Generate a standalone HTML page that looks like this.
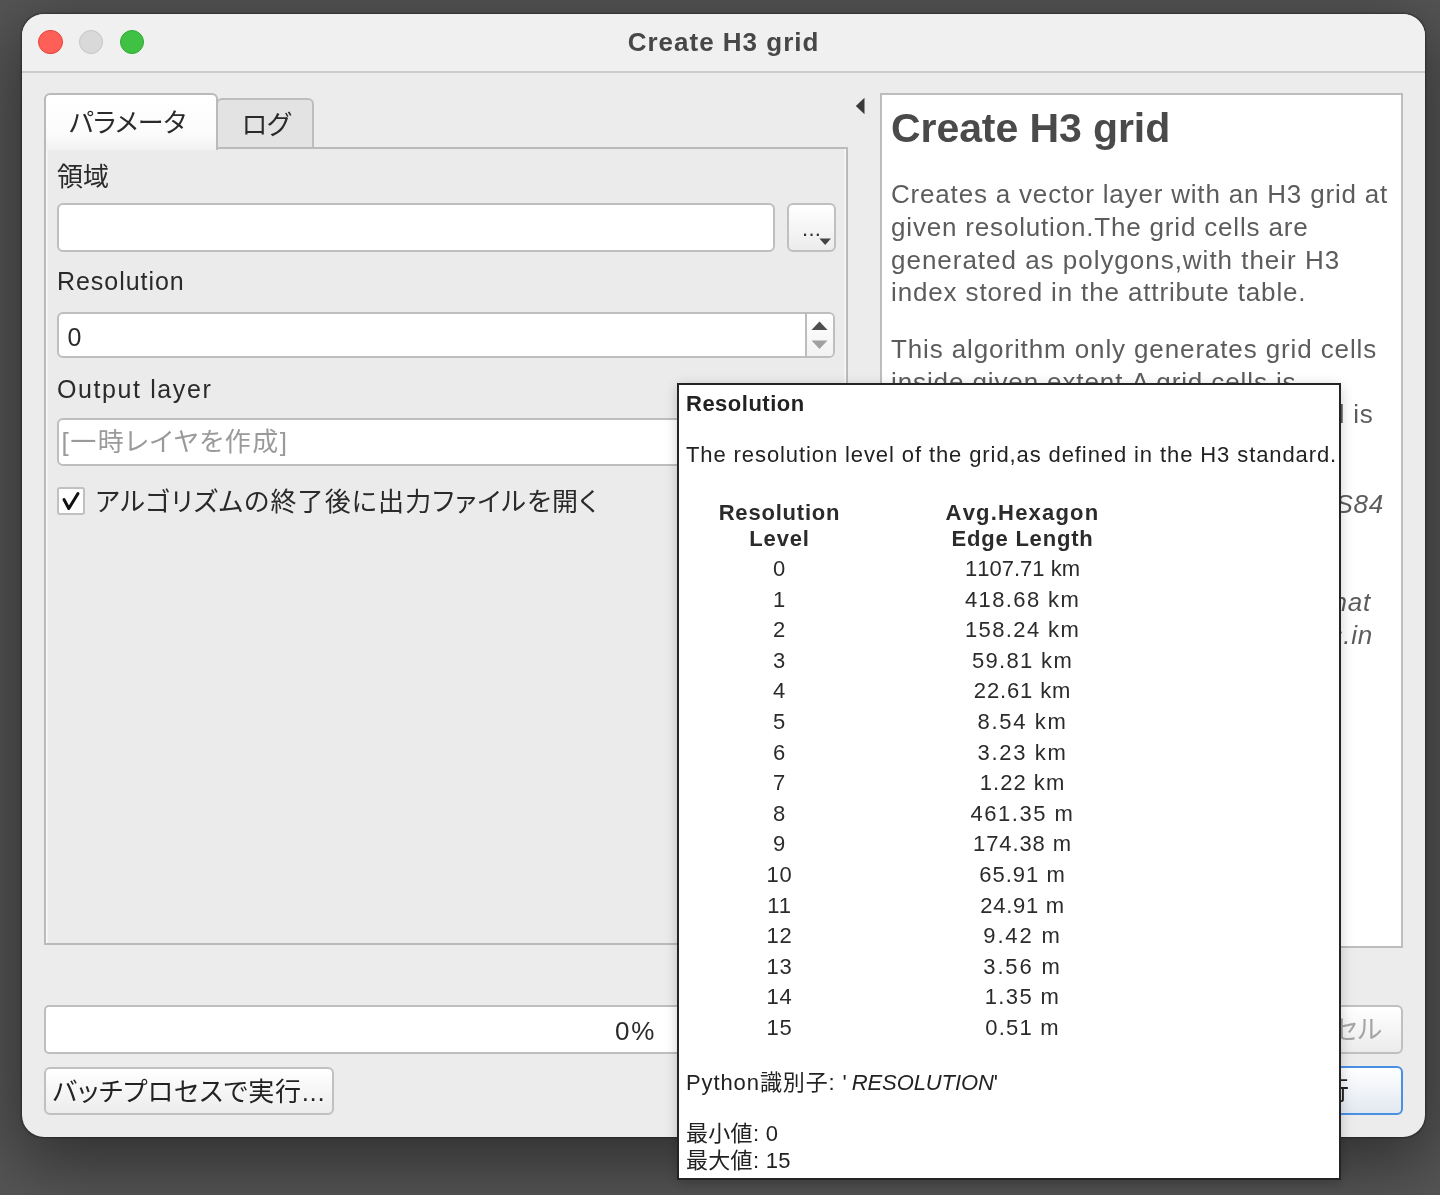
<!DOCTYPE html>
<html lang="ja">
<head>
<meta charset="utf-8">
<title>Create H3 grid</title>
<style>
html,body{margin:0;padding:0;}
body{width:1440px;height:1195px;overflow:hidden;position:relative;background:#555555;
 font-family:"Liberation Sans","Noto Sans CJK JP",sans-serif;color:#262626;font-feature-settings:"palt";}
*{box-sizing:border-box;}
.abs{position:absolute;}
#stage{position:absolute;left:0;top:0;width:1440px;height:1195px;overflow:hidden;filter:blur(0.7px);}
#win{position:absolute;left:21.7px;top:13.6px;width:1403.7px;height:1123px;border-radius:22px;background:#ececec;
 box-shadow:0 20px 70px 6px rgba(0,0,0,.45),0 0 2px 0.5px rgba(0,0,0,.35);overflow:hidden;}
#titlebar{position:absolute;left:0;top:0;width:100%;height:59.2px;background:#f0f0f0;border-bottom:2px solid #cbcbcb;}
.tl{position:absolute;top:16.4px;width:24.5px;height:24.5px;border-radius:50%;}
#title{position:absolute;left:0;right:0;top:0;height:57px;line-height:56px;text-align:center;font-weight:bold;font-size:26px;color:#474747;letter-spacing:1px;}
.t{position:absolute;white-space:pre;line-height:1;}
.lbl{font-size:26px;color:#2a2a2a;}
.field{position:absolute;background:#fff;border:2px solid #bebebe;border-radius:6px;}
.btn{position:absolute;border:2px solid #c0c0c0;border-radius:6px;background:linear-gradient(#ffffff,#ececec);}
#tipframe{position:absolute;left:677px;top:383px;width:664px;height:797px;background:#fff;border:2px solid #242424;box-shadow:0 3px 12px rgba(0,0,0,.2);}
#tip{position:absolute;left:679px;top:385px;width:660.5px;height:791.5px;}
.tr{position:absolute;left:0;width:100%;height:30px;font-size:22px;line-height:30px;letter-spacing:0.8px;color:#2b2b2b;white-space:pre;}
.c1{position:absolute;left:0;width:201px;text-align:center;}
.c2{position:absolute;left:243px;width:201px;text-align:center;font-kerning:none;}
.help{font-size:26px;color:#5c5c5c;letter-spacing:0.75px;}
.r{text-align:right;}
</style>
</head>
<body>
<div id="stage">
<div id="win">
  <div id="titlebar">
    <div class="tl" style="left:16.5px;background:#fe5f57;border:1px solid #e2463f;"></div>
    <div class="tl" style="left:57.2px;background:#d9d9d9;border:1px solid #c4c4c4;"></div>
    <div class="tl" style="left:98px;background:#3fc143;border:1px solid #2fa833;"></div>
    <div id="title">Create H3 grid</div>
  </div>
</div>

<!-- tab pane -->
<div class="abs" style="left:44px;top:147px;width:804px;height:798px;border:2px solid #bababa;background:#ebebeb;box-shadow:inset 1.5px 0 0 rgba(255,255,255,.7),inset -1.5px 0 0 rgba(255,255,255,.7);"></div>
<div class="abs" style="left:216px;top:98px;width:98px;height:51px;border:2px solid #bdbdbd;border-bottom:2px solid #bababa;border-radius:6px 6px 0 0;background:#e3e3e3;"></div>
<div class="t" style="left:242px;top:111.5px;font-size:26px;letter-spacing:-0.3px;color:#2a2a2a;">ログ</div>
<div class="abs" style="left:44px;top:93px;width:174px;height:57px;border:2px solid #bababa;border-bottom:none;border-radius:6px 6px 0 0;background:linear-gradient(#ffffff,#fbfbfb 70%,#f2f2f2);"></div>
<div class="t" style="left:69px;top:109.5px;font-size:26px;letter-spacing:0px;color:#2a2a2a;">パラメータ</div>

<div class="t lbl" style="left:57px;top:163.5px;">領域</div>
<div class="field" style="left:57px;top:203px;width:718px;height:49px;"></div>
<div class="btn" style="left:787px;top:203px;width:49px;height:49px;"></div>
<div class="t" style="left:802px;top:218px;font-size:22px;letter-spacing:0.3px;color:#333;">...</div>
<svg class="abs" style="left:819.3px;top:237.6px" width="12.4" height="7.4" viewBox="0 0 12.4 7.4"><path d="M0.4 0.6 L12 0.6 L6.2 7 Z" fill="#444"/></svg>

<div class="t lbl" style="left:57px;top:269.4px;font-size:25px;letter-spacing:0.95px;">Resolution</div>
<div class="field" style="left:56.7px;top:312px;width:778.7px;height:46px;"></div>
<div class="abs" style="left:805px;top:314px;width:2px;height:42px;background:#bdbdbd;"></div>
<div class="abs" style="left:807px;top:314px;width:26.4px;height:42px;background:linear-gradient(#fff,#f2f2f2);border-radius:0 4px 4px 0;"></div>
<svg class="abs" style="left:811px;top:321px" width="17" height="9.4" viewBox="0 0 17 9.4"><path d="M0.5 9 L8.5 0.5 L16.5 9 Z" fill="#4e4e4e"/></svg>
<svg class="abs" style="left:811px;top:339.6px" width="17" height="9.4" viewBox="0 0 17 9.4"><path d="M0.5 0.4 L8.5 8.9 L16.5 0.4 Z" fill="#a0a0a0"/></svg>
<div class="t lbl" style="left:67.5px;top:324.5px;font-size:25px;">0</div>

<div class="t lbl" style="left:57px;top:377px;font-size:25px;letter-spacing:1.6px;">Output layer</div>
<div class="field" style="left:56.7px;top:417.6px;width:778.7px;height:48.4px;"></div>
<div class="t" style="left:61.5px;top:429.4px;font-size:26px;letter-spacing:1.5px;color:#9a9a9a;">[一時レイヤを作成]</div>

<div class="abs" style="left:56.7px;top:487px;width:28.2px;height:28.2px;background:#fff;border:2px solid #c0c0c0;border-radius:3px;"></div>
<svg class="abs" style="left:57px;top:487px" width="28" height="28" viewBox="0 0 28 28"><path d="M7 12.5 L11.8 21.5 L21 6.5" fill="none" stroke="#111" stroke-width="3" stroke-linecap="round" stroke-linejoin="round"/></svg>
<div class="t" style="left:95.5px;top:488.5px;font-size:26px;letter-spacing:1.15px;color:#2a2a2a;">アルゴリズムの終了後に出力ファイルを開く</div>

<!-- splitter arrow -->
<svg class="abs" style="left:855px;top:97px" width="10" height="18" viewBox="0 0 10 18"><path d="M9.5 0.8 L9.5 17.2 L0.8 9 Z" fill="#3a3a3a"/></svg>

<!-- help box -->
<div class="abs" style="left:880px;top:93px;width:523px;height:854.5px;background:#fff;border:2px solid #bdbdbd;"></div>
<div class="t" style="left:891px;top:107.6px;font-size:41px;font-weight:bold;color:#4a4a4a;letter-spacing:-0.08px;">Create H3 grid</div>
<div class="t help" style="left:891px;top:181.2px;letter-spacing:0.81px">Creates a vector layer with an H3 grid at</div>
<div class="t help" style="left:891px;top:213.6px;letter-spacing:0.82px">given resolution.The grid cells are</div>
<div class="t help" style="left:891px;top:246.5px;letter-spacing:0.98px">generated as polygons,with their H3</div>
<div class="t help" style="left:891px;top:279.4px;letter-spacing:0.86px">index stored in the attribute table.</div>
<div class="t help" style="left:891px;top:336.4px;letter-spacing:0.88px">This algorithm only generates grid cells</div>
<div class="t help" style="left:891px;top:369.4px;letter-spacing:0.89px">inside given extent.A grid cells is</div>
<div class="t help r" style="right:66.5px;top:401.2px;">generated only if the cell centroid is</div>
<div class="t help" style="left:891px;top:434px;">inside the extent.</div>
<div class="t help r" style="right:56px;top:491px;font-style:italic;">The output layer CRS is always WGS84</div>
<div class="t help r" style="right:69px;top:589px;font-style:italic;">Resolution levels are defined so that</div>
<div class="t help r" style="right:67px;top:621.7px;font-style:italic;">each finer level subdivides cells.in</div>

<!-- bottom -->
<div class="field" style="left:44px;top:1005px;width:1183px;height:48.5px;border-radius:5px;"></div>
<div class="t lbl" style="left:615px;top:1017.7px;letter-spacing:1.8px;">0%</div>
<div class="btn" style="left:1238px;top:1004.6px;width:165px;height:49px;"></div>
<div class="t" style="left:1264.4px;top:1017px;font-size:26px;letter-spacing:0px;color:#a5a5a5;">キャンセル</div>
<div class="btn" style="left:44px;top:1066.5px;width:290px;height:48px;"></div>
<div class="t" style="left:52.5px;top:1079px;font-size:26px;letter-spacing:0.7px;color:#222;">バッチプロセスで実行...</div>
<div class="btn" style="left:1238px;top:1065.6px;width:165px;height:49.5px;border:2px solid #4a90e2;background:linear-gradient(#ffffff,#e2e8f0);"></div>
<div class="t" style="left:1297px;top:1078px;font-size:26px;letter-spacing:0px;color:#222;">実行</div>

<!-- tooltip -->
<div id="tipframe"></div>
<div id="tip">
  <div class="t" style="left:7px;top:8px;font-size:22px;font-weight:bold;letter-spacing:0.5px;color:#222;">Resolution</div>
  <div class="t" style="left:7px;top:59px;font-size:22px;letter-spacing:0.9px;color:#222;">The resolution level of the grid,as defined in the H3 standard.</div>
  <div class="tr" style="top:113.5px;font-weight:bold;height:27px;line-height:27px;"><span class="c1">Resolution</span><span class="c2" style="letter-spacing:1.2px">Avg.Hexagon</span></div>
  <div class="tr" style="top:140px;font-weight:bold;height:27px;line-height:27px;"><span class="c1">Level</span><span class="c2">Edge Length</span></div>
  <div class="tr" style="top:169.0px"><span class="c1">0</span><span class="c2" style="letter-spacing:0.02px">1107.71 km</span></div>
  <div class="tr" style="top:199.6px"><span class="c1">1</span><span class="c2" style="letter-spacing:1.39px">418.68 km</span></div>
  <div class="tr" style="top:230.2px"><span class="c1">2</span><span class="c2" style="letter-spacing:1.39px">158.24 km</span></div>
  <div class="tr" style="top:260.8px"><span class="c1">3</span><span class="c2" style="letter-spacing:1.34px">59.81 km</span></div>
  <div class="tr" style="top:291.4px"><span class="c1">4</span><span class="c2" style="letter-spacing:0.86px">22.61 km</span></div>
  <div class="tr" style="top:322.0px"><span class="c1">5</span><span class="c2" style="letter-spacing:1.65px">8.54 km</span></div>
  <div class="tr" style="top:352.6px"><span class="c1">6</span><span class="c2" style="letter-spacing:1.65px">3.23 km</span></div>
  <div class="tr" style="top:383.2px"><span class="c1">7</span><span class="c2" style="letter-spacing:1.03px">1.22 km</span></div>
  <div class="tr" style="top:413.8px"><span class="c1">8</span><span class="c2" style="letter-spacing:1.52px">461.35 m</span></div>
  <div class="tr" style="top:444.4px"><span class="c1">9</span><span class="c2" style="letter-spacing:0.91px">174.38 m</span></div>
  <div class="tr" style="top:475.0px"><span class="c1">10</span><span class="c2" style="letter-spacing:1.00px">65.91 m</span></div>
  <div class="tr" style="top:505.6px"><span class="c1">11</span><span class="c2" style="letter-spacing:0.70px">24.91 m</span></div>
  <div class="tr" style="top:536.2px"><span class="c1">12</span><span class="c2" style="letter-spacing:1.86px">9.42 m</span></div>
  <div class="tr" style="top:566.8px"><span class="c1">13</span><span class="c2" style="letter-spacing:1.86px">3.56 m</span></div>
  <div class="tr" style="top:597.4px"><span class="c1">14</span><span class="c2" style="letter-spacing:1.41px">1.35 m</span></div>
  <div class="tr" style="top:628.0px"><span class="c1">15</span><span class="c2" style="letter-spacing:1.22px">0.51 m</span></div>

  <div class="t" style="left:7px;top:687px;font-size:22px;letter-spacing:0.9px;color:#222;">Python識別子: '<i style="letter-spacing:-0.1px;margin-left:4px">RESOLUTION</i>'</div>
  <div class="t" style="left:7px;top:738px;font-size:22px;letter-spacing:0.3px;color:#222;">最小値: 0</div>
  <div class="t" style="left:7px;top:765px;font-size:22px;letter-spacing:0.3px;color:#222;">最大値: 15</div>
</div>
</div>
</body>
</html>
